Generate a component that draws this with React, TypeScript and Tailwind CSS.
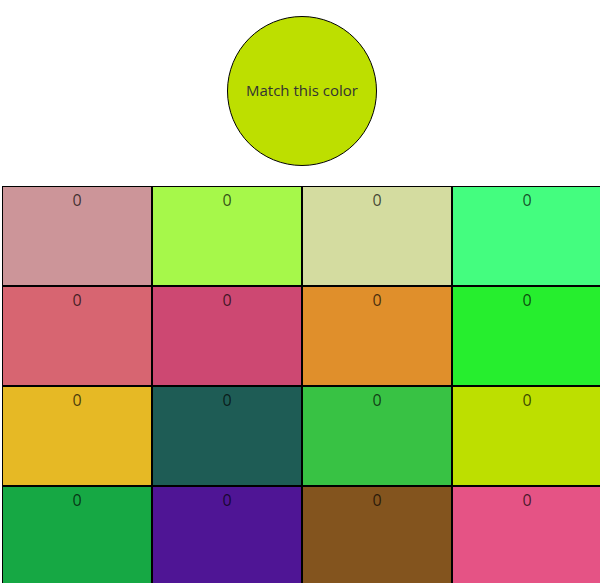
import React from 'react';

const colors: string[] = [
  'bg-[#cc9599]', 'bg-[#a6f84a]', 'bg-[#d4dca0]', 'bg-[#44fd7f]',
  'bg-[#d76571]', 'bg-[#cd4872]', 'bg-[#e08f2b]', 'bg-[#26ee2e]',
  'bg-[#e6b925]', 'bg-[#1e5c55]', 'bg-[#38c244]', 'bg-[#bddf00]',
  'bg-[#16a844]', 'bg-[#4f1595]', 'bg-[#83541e]', 'bg-[#e55385]',
];

const App: React.FC = () => {
  return (
    <div className="ml-[2px] w-[600px] font-['Open_Sans',sans-serif]">
      <div className="mx-auto mt-4 flex h-[150px] w-[150px] items-center justify-center rounded-full border border-black bg-[#bddf00] pb-[2px] text-[15px] text-[#333]">
        Match this color
      </div>
      <div className="mt-5 grid grid-cols-4">
        {colors.map((c, i) => (
          <div key={i} className={`h-[100px] border border-black pt-px text-center text-base text-black/70 ${c}`}>
            0
          </div>
        ))}
      </div>
    </div>
  );
};

export default App;
